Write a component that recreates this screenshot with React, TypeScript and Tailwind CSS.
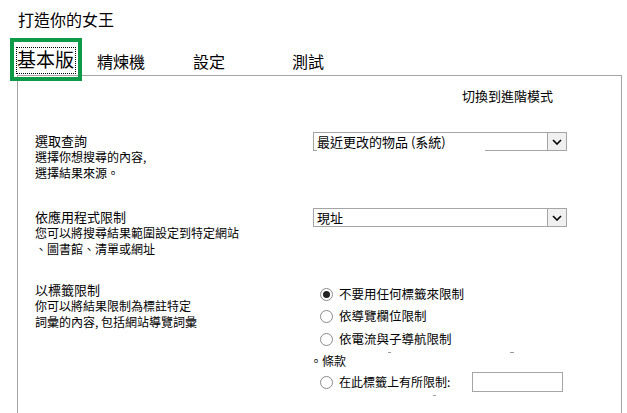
import React from 'react';

const Chevron: React.FC = () => (
  <svg width="10" height="6" viewBox="0 0 10 6" fill="none">
    <path d="M1 1l4 4 4-4" stroke="#000" strokeWidth="1.6" />
  </svg>
);

const Radio: React.FC<{ checked?: boolean }> = ({ checked }) => (
  <span className="w-[13px] h-[13px] rounded-full border border-[#8a8a8a] bg-white flex items-center justify-center shrink-0">
    {checked && <span className="w-[7px] h-[7px] rounded-full bg-[#222]" />}
  </span>
);

const Select: React.FC<{ value: string; brokenBottom?: boolean }> = ({ value, brokenBottom }) => (
  <div className="w-[254px] h-[19px] flex flex-col">
    <div
      className={
        brokenBottom
          ? 'flex-1 flex items-center border-l border-t border-r border-[#a5a5a5]'
          : 'flex-1 flex items-center border border-[#a5a5a5]'
      }
    >
      <span className="flex-1 pl-[3px] text-[13px] leading-[16px] whitespace-nowrap">{value}</span>
      <span className="w-[19px] h-full flex items-center justify-center bg-[#f0f0f0] border-l border-[#a5a5a5]">
        <Chevron />
      </span>
    </div>
    {brokenBottom && (
      <div className="flex h-px">
        <span className="w-[4px] bg-[#a5a5a5]" />
        <span className="flex-1" />
        <span className="w-[82px] bg-[#a5a5a5]" />
      </div>
    )}
  </div>
);

export default function App() {
  return (
    <div className="w-[627px] h-[413px] overflow-hidden bg-white text-black font-['Noto_Sans_CJK_TC','Noto_Sans',sans-serif]">
      <div className="pl-[18px] pt-[9px] h-[30px] text-[16px] leading-[20px]">打造你的女王</div>

      <div className="relative h-[45px] flex items-start pt-[20px]">
        <div className="absolute left-[10px] top-[8px] w-[72px] h-[43px] border-[4px] border-[#0d9b47] z-10" />
        <div className="w-[80px] ml-[16px] h-[26px] relative">
          <span className="absolute left-0 -top-[3px] w-[60px] h-[27px] border border-dotted border-black" />
          <span className="absolute left-[1px] -top-[4px] text-[19px] leading-[26px]">基本版</span>
        </div>
        <div className="w-[97px] text-[16px] leading-[22px] pl-px">精煉機</div>
        <div className="w-[99px] text-[16px] leading-[22px]">設定</div>
        <div className="text-[16px] leading-[22px]">測試</div>
      </div>

      <div className="ml-[17px] w-[605px] h-[340px] border-l border-t border-r border-[#a5a5a5]">
        <div className="flex justify-end pr-[68px] pt-[12px] text-[13px] leading-[16px]">切換到進階模式</div>

        <div className="mt-[28px] pl-[17px] flex h-[76px]">
          <div className="w-[278px]">
            <div className="text-[13px] leading-[16px] pt-px">選取查詢</div>
            <div className="text-[12px] leading-[16px]">
              <div>選擇你想搜尋的內容,</div>
              <div>選擇結果來源。</div>
            </div>
          </div>
          <Select value="最近更改的物品 (系統)" brokenBottom />
        </div>

        <div className="pl-[17px] flex h-[74px]">
          <div className="w-[278px]">
            <div className="text-[13px] leading-[16px] pt-px">依應用程式限制</div>
            <div className="text-[12px] leading-[16px]">
              <div>您可以將搜尋結果範圍設定到特定網站</div>
              <div>、圖書館、清單或網址</div>
            </div>
          </div>
          <Select value="現址" />
        </div>

        <div className="pl-[17px] flex">
          <div className="w-[278px]">
            <div className="text-[13px] leading-[16px]">以標籤限制</div>
            <div className="text-[12px] leading-[16px]">
              <div>你可以將結果限制為標註特定</div>
              <div>詞彙的內容, 包括網站導覽詞彙</div>
            </div>
          </div>
          <div className="flex flex-col pt-px text-[12.5px]">
            <div className="flex items-center gap-[6px] pl-[7px] h-[22px]">
              <Radio checked />
              <span className="leading-[16px]">不要用任何標籤來限制</span>
            </div>
            <div className="flex items-center gap-[6px] pl-[7px] h-[22px]">
              <Radio />
              <span className="leading-[16px]">依導覽欄位限制</span>
            </div>
            <div className="flex items-center gap-[6px] pl-[7px] h-[24px] relative">
              <Radio />
              <span className="leading-[16px]">依電流與子導航限制</span>
              <span className="absolute left-[75px] bottom-[-2px] w-[3px] h-px bg-[#999]" />
              <span className="absolute left-[197px] bottom-[-2px] w-[4px] h-px bg-[#999]" />
            </div>
            <div className="h-[20px] flex items-center -ml-[3px] text-[12px] leading-[16px]">。條款</div>
            <div className="flex items-center pl-[7px] h-[22px] relative">
              <Radio />
              <span className="text-[12px] leading-[16px] ml-[6px] w-[133px]">在此標籤上有所限制:</span>
              <span className="w-[91px] h-[20px] border border-[#a5a5a5]" />
              <span className="absolute left-[120px] bottom-[-3px] w-[3px] h-px bg-[#999]" />
            </div>
          </div>
        </div>
      </div>
    </div>
  );
}
